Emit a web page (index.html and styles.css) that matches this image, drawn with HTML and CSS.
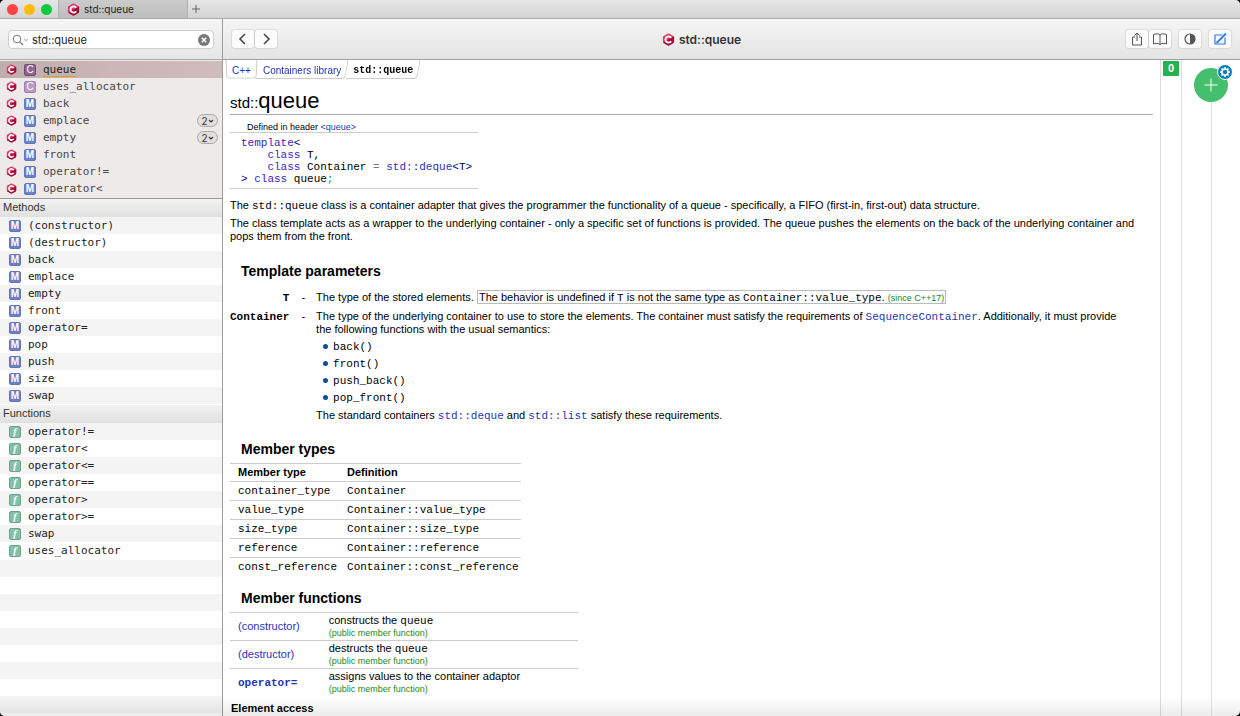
FILE: index.html
```html
<!DOCTYPE html>
<html lang="en">
<head>
    <meta charset="UTF-8">
    <meta name="viewport" content="width=device-width, initial-scale=1.0">
    <title>std::queue</title>
    <link rel="stylesheet" href="styles.css">
</head>
<body>
    <svg class="sprite" aria-hidden="true">
        <symbol id="logo" viewBox="0 0 14 14">
            <path d="M5.9 0.8 Q7 0.2 8.1 0.8 L12.2 3.2 Q13 3.7 13 4.7 V9.3 Q13 10.3 12.2 10.8 L8.1 13.2 Q7 13.8 5.9 13.2 L1.8 10.8 Q1 10.3 1 9.3 V4.7 Q1 3.7 1.8 3.2 Z" fill="#dc3a66"/>
            <path d="M12.8 3.8 Q13 4.2 13 4.7 V9.3 Q13 10.3 12.2 10.8 L8.1 13.2 Q7 13.8 5.9 13.2 L1.8 10.8 L1.2 10.2 L7 7 Z" fill="#a60b36"/>
            <path d="M9.8 5.2 A3.3 3.3 0 1 0 9.8 8.8" fill="none" stroke="#fff" stroke-width="2"/>
        </symbol>
        <symbol id="chevron" viewBox="0 0 6 6">
            <path d="M1 2 L3 4 L5 2" fill="none" stroke="currentColor" stroke-width="1.1"/>
        </symbol>
    </svg>

    <div class="window">
        <header class="titlebar">
            <span class="light red"></span>
            <span class="light yellow"></span>
            <span class="light green"></span>
            <div class="tab">
                <svg class="logo"><use href="#logo"/></svg>
                <span>std::queue</span>
            </div>
            <button class="new-tab" type="button" aria-label="New tab">
                <svg viewBox="0 0 10 10"><path d="M5 1 V9 M1 5 H9" stroke="#666" stroke-width="1" fill="none"/></svg>
            </button>
        </header>

        <div class="panes">
            <aside class="sidebar">
                <div class="search-bar">
                    <label class="search">
                        <svg class="search-icon" viewBox="0 0 18 12">
                            <circle cx="5" cy="5" r="3.8" fill="none" stroke="#777" stroke-width="1"/>
                            <path d="M7.8 7.8 L11 11" stroke="#777" stroke-width="1.2"/>
                            <path d="M12.3 5 L14 6.7 L15.7 5" fill="none" stroke="#888" stroke-width="1"/>
                        </svg>
                        <input type="text" value="std::queue" aria-label="Search">
                        <button class="clear" type="button" aria-label="Clear">
                            <svg viewBox="0 0 12 12"><circle cx="6" cy="6" r="6" fill="#777"/><path d="M3.8 3.8 L8.2 8.2 M8.2 3.8 L3.8 8.2" stroke="#fff" stroke-width="1.5"/></svg>
                        </button>
                    </label>
                </div>

                <ul class="results">
                    <li class="selected"><svg class="logo"><use href="#logo"/></svg><i class="kind class-dark">C</i><mark>queue</mark></li>
                    <li><svg class="logo"><use href="#logo"/></svg><i class="kind class">C</i>uses_allocator</li>
                    <li><svg class="logo"><use href="#logo"/></svg><i class="kind method">M</i>back</li>
                    <li><svg class="logo"><use href="#logo"/></svg><i class="kind method">M</i>emplace <button class="count" type="button">2<svg><use href="#chevron"/></svg></button></li>
                    <li><svg class="logo"><use href="#logo"/></svg><i class="kind method">M</i>empty <button class="count" type="button">2<svg><use href="#chevron"/></svg></button></li>
                    <li><svg class="logo"><use href="#logo"/></svg><i class="kind method">M</i>front</li>
                    <li><svg class="logo"><use href="#logo"/></svg><i class="kind method">M</i>operator!=</li>
                    <li><svg class="logo"><use href="#logo"/></svg><i class="kind method">M</i>operator&lt;</li>
                </ul>

                <h2>Methods</h2>
                <ul class="members">
                    <li><i class="kind method">M</i>(constructor)</li>
                    <li><i class="kind method">M</i>(destructor)</li>
                    <li><i class="kind method">M</i>back</li>
                    <li><i class="kind method">M</i>emplace</li>
                    <li><i class="kind method">M</i>empty</li>
                    <li><i class="kind method">M</i>front</li>
                    <li><i class="kind method">M</i>operator=</li>
                    <li><i class="kind method">M</i>pop</li>
                    <li><i class="kind method">M</i>push</li>
                    <li><i class="kind method">M</i>size</li>
                    <li><i class="kind method">M</i>swap</li>
                </ul>

                <h2>Functions</h2>
                <ul class="members">
                    <li><i class="kind func">f</i>operator!=</li>
                    <li><i class="kind func">f</i>operator&lt;</li>
                    <li><i class="kind func">f</i>operator&lt;=</li>
                    <li><i class="kind func">f</i>operator==</li>
                    <li><i class="kind func">f</i>operator&gt;</li>
                    <li><i class="kind func">f</i>operator&gt;=</li>
                    <li><i class="kind func">f</i>swap</li>
                    <li><i class="kind func">f</i>uses_allocator</li>
                </ul>
                <div class="empty-rows"></div>
            </aside>

            <main class="main">
                <div class="toolbar">
                    <div class="tools">
                        <button type="button" aria-label="Back"><svg viewBox="0 0 14 14"><path d="M9 2 L4 7 L9 12" fill="none" stroke="#444" stroke-width="1.5"/></svg></button>
                        <button type="button" aria-label="Forward"><svg viewBox="0 0 14 14"><path d="M5 2 L10 7 L5 12" fill="none" stroke="#444" stroke-width="1.5"/></svg></button>
                    </div>
                    <div class="title"><svg class="logo"><use href="#logo"/></svg>std::queue</div>
                    <div class="tools right">
                        <div class="segmented">
                            <button type="button" aria-label="Share"><svg viewBox="0 0 14 14"><path d="M5 5 H2.5 V13 H11.5 V5 H9 M7 9 V1 M4.5 3.5 L7 1 L9.5 3.5" fill="none" stroke="#555" stroke-width="1"/></svg></button>
                            <button type="button" aria-label="Bookmarks"><svg viewBox="0 0 14 14"><path d="M7 3 C5.5 1.5 2.5 1.5 0.5 2.5 V12 C2.5 11 5.5 11 7 12.5 C8.5 11 11.5 11 13.5 12 V2.5 C11.5 1.5 8.5 1.5 7 3 V12.5" fill="none" stroke="#555" stroke-width="1"/></svg></button>
                        </div>
                        <button type="button" aria-label="Contrast"><svg viewBox="0 0 14 14"><circle cx="7" cy="7" r="5" fill="none" stroke="#555" stroke-width="1.2"/><path d="M7 2 A5 5 0 0 1 7 12 Z" fill="#555"/></svg></button>
                        <button type="button" aria-label="Annotate"><svg viewBox="0 0 14 14"><path d="M9.5 3 H2 V12 H12 V5.5" fill="none" stroke="#2f7cf0" stroke-width="1.2"/><path d="M3.5 11 L13 1.5" stroke="#2f7cf0" stroke-width="1.8"/></svg></button>
                    </div>
                </div>

                <div class="viewer">
                    <article class="doc">
                        <nav class="crumbs">
                            <a href="#cpp">C++</a>
                            <a href="#containers">Containers library</a>
                            <b>std::queue</b>
                        </nav>

                        <h1><small>std::</small>queue</h1>

                        <table class="declaration">
                            <tr><td class="header">Defined in header <a href="#header">&lt;queue&gt;</a></td></tr>
                            <tr><td><pre><b>template</b><u>&lt;</u>
    <b>class</b> T,
    <b>class</b> Container <s>=</s> <a href="#deque">std::deque</a><u>&lt;</u>T<u>&gt;</u>
<u>&gt;</u> <b>class</b> queue<em>;</em></pre></td></tr>
                        </table>

                        <p>The <code>std::queue</code> class is a container adapter that gives the programmer the functionality of a queue - specifically, a FIFO (first-in, first-out) data structure.</p>
                        <p>The class template acts as a wrapper to the underlying container - only a specific set of functions is provided. The queue pushes the elements on the back of the underlying container and pops them from the front.</p>

                        <h3>Template parameters</h3>
                        <table class="params">
                            <tr>
                                <th><code>T</code></th>
                                <td>-</td>
                                <td>The type of the stored elements. <span class="since-box">The behavior is undefined if <code>T</code> is not the same type as <code>Container::value_type</code>. <span class="note">(since C++17)</span></span></td>
                            </tr>
                            <tr>
                                <th><code>Container</code></th>
                                <td>-</td>
                                <td>The type of the underlying container to use to store the elements. The container must satisfy the requirements of <a href="#sequence"><code>SequenceContainer</code></a>. Additionally, it must provide the following functions with the usual semantics:
                                    <ul>
                                        <li><code>back()</code></li>
                                        <li><code>front()</code></li>
                                        <li><code>push_back()</code></li>
                                        <li><code>pop_front()</code></li>
                                    </ul>
                                    The standard containers <a href="#deque"><code>std::deque</code></a> and <a href="#list"><code>std::list</code></a> satisfy these requirements.
                                </td>
                            </tr>
                        </table>

                        <h3>Member types</h3>
                        <table class="types">
                            <tr><th>Member type</th><th>Definition</th></tr>
                            <tr><td><code>container_type</code></td><td><code>Container</code></td></tr>
                            <tr><td><code>value_type</code></td><td><code>Container::value_type</code></td></tr>
                            <tr><td><code>size_type</code></td><td><code>Container::size_type</code></td></tr>
                            <tr><td><code>reference</code></td><td><code>Container::reference</code></td></tr>
                            <tr><td><code>const_reference</code></td><td><code>Container::const_reference</code></td></tr>
                        </table>

                        <h3>Member functions</h3>
                        <table class="functions">
                            <tr><td><a href="#ctor">(constructor)</a></td><td>constructs the <code>queue</code><div class="note">(public member function)</div></td></tr>
                            <tr><td><a href="#dtor">(destructor)</a></td><td>destructs the <code>queue</code><div class="note">(public member function)</div></td></tr>
                            <tr><td><a href="#assign"><code><b>operator=</b></code></a></td><td>assigns values to the container adaptor<div class="note">(public member function)</div></td></tr>
                        </table>
                        <h4>Element access</h4>
                    </article>

                    <div class="gutter"><span>0</span></div>
                    <div class="notes">
                        <div class="add-wrap">
                            <button class="add" type="button" aria-label="Add note"><svg viewBox="0 0 14 14"><path d="M7 0.5 V13.5 M0.5 7 H13.5" stroke="#fff" stroke-width="1"/></svg></button>
                            <button class="settings" type="button" aria-label="Settings"><svg viewBox="0 0 12 12"><circle cx="6" cy="6" r="3" fill="none" stroke="#fff" stroke-width="1.6"/><path d="M6 1 V3 M6 9 V11 M1 6 H3 M9 6 H11 M2.5 2.5 L3.9 3.9 M8.1 8.1 L9.5 9.5 M9.5 2.5 L8.1 3.9 M3.9 8.1 L2.5 9.5" stroke="#fff" stroke-width="1.5"/></svg></button>
                        </div>
                        <div class="timeline"></div>
                    </div>
                </div>
            </main>
        </div>
    </div>
</body>
</html>
```
FILE: styles.css
```css
* {
    box-sizing: border-box;
}
body {
    margin: 0;
    background: #111;
    font-family: "Liberation Sans", Arial, sans-serif;
    font-size: 11px;
    color: #000;
}
button {
    padding: 0;
    border: none;
    background: none;
    font: inherit;
    cursor: pointer;
}
a {
    color: #1f35b5;
    text-decoration: none;
}
ul {
    margin: 0;
    padding: 0;
    list-style: none;
}
.sprite {
    display: none;
}
.logo {
    width: 13px;
    height: 13px;
    flex: none;
}
.window {
    position: relative;
    height: 100vh;
    display: flex;
    flex-direction: column;
    overflow: hidden;
    border-radius: 5px;
    background: #fff;
}
/* soft shade along the bottom edge of the window */
.window::after {
    content: "";
    position: absolute;
    left: 0;
    right: 0;
    bottom: 0;
    height: 20px;
    background: linear-gradient(rgba(0, 0, 0, 0), rgba(0, 0, 0, 0.08));
    pointer-events: none;
}

/* title bar */
.titlebar {
    display: flex;
    align-items: center;
    height: 19px;
    flex: none;
    padding-left: 7px;
    background: linear-gradient(#e6e6e6, #d4d4d4);
    border-bottom: 1px solid #acacac;
}
.light {
    width: 11px;
    height: 11px;
    margin-right: 6px;
    border-radius: 50%;
}
.red { background: #fc4245; }
.yellow { background: #fdbc0d; }
.green { background: #0fca3d; }
.tab {
    display: flex;
    align-items: center;
    gap: 4px;
    width: 130px;
    height: 18px;
    padding-left: 8px;
    background: linear-gradient(#cbcbcb, #bdbdbd);
    border-left: 1px solid #b0b0b0;
    border-right: 1px solid #b0b0b0;
    font-family: Inter, sans-serif;
    font-size: 10px;
    color: #222;
}
.new-tab {
    margin-left: 3px;
    height: 10px;
}
.new-tab svg {
    display: block;
    width: 10px;
    height: 10px;
}

.panes {
    display: flex;
    flex: 1;
    min-height: 0;
}

/* sidebar */
.sidebar {
    display: flex;
    flex-direction: column;
    flex: none;
    width: 223px;
    overflow: hidden;
    border-right: 1px solid #9c9c9c;
    font-family: "DejaVu Sans Mono", monospace;
    color: #222;
}
.search-bar {
    height: 41px;
    flex: none;
    padding: 11px 8px;
    background: linear-gradient(#f5f5f5, #e6e6e6);
    border-bottom: 1px solid #a8a8a8;
}
.search {
    display: flex;
    align-items: center;
    height: 19px;
    padding: 0 3px;
    background: #fff;
    border: 1px solid #cfcfcf;
    border-radius: 4px;
}
.search-icon {
    width: 18px;
    height: 12px;
    flex: none;
}
.search input {
    flex: 1;
    min-width: 0;
    padding: 0 2px;
    border: none;
    outline: none;
    background: none;
    font-family: Inter, sans-serif;
    font-size: 11px;
    color: #222;
}
.clear, .clear svg {
    display: block;
    width: 12px;
    height: 12px;
}
.sidebar li {
    display: flex;
    align-items: center;
    height: 17px;
}
.results {
    flex: none;
    padding: 1px 0;
    background: #eeeaea;
    border-bottom: 1px solid #999;
    color: #4a4545;
}
.results li {
    padding: 0 4px 0 6px;
}
.results .logo {
    width: 11px;
    height: 11px;
    margin-right: 7px;
}
.results .selected {
    background: linear-gradient(90deg, #bfaeb0, #cbb5b6 50%, #cfbcbc);
}
.selected mark {
    background: none;
    color: #222;
    border-bottom: 1px solid #d9a520;
    line-height: 13px;
}
.kind {
    display: block;
    flex: none;
    width: 12px;
    height: 12px;
    margin-right: 7px;
    border: 1px solid;
    border-radius: 2px;
    font-family: "Liberation Sans", Arial, sans-serif;
    font-size: 10px;
    font-style: normal;
    line-height: 10px;
    text-align: center;
    color: #fff;
}
.method {
    background: #7080c6;
    border-color: #6474bd;
    font-weight: bold;
}
.class {
    background: #b79ac6;
    border-color: #9d80b0;
}
.class-dark {
    background: #8e6590;
    border-color: #70496f;
}
.func {
    background: #86bfa5;
    border-color: #66a68a;
    font-family: "Liberation Serif", serif;
    font-style: italic;
    font-weight: bold;
}
.count {
    display: flex;
    align-items: center;
    justify-content: center;
    width: 21px;
    height: 13px;
    margin-left: auto;
    background: #e3dfdf;
    border: 1px solid #aaa6a6;
    border-radius: 7px;
    font-family: Inter, sans-serif;
    font-size: 10px;
    color: #333;
}
.count svg {
    width: 6px;
    height: 6px;
}
.sidebar h2 {
    flex: none;
    height: 18px;
    margin: 0;
    padding-left: 3px;
    background: linear-gradient(#f2f2f2, #e0e0e0);
    font-family: "Liberation Sans", Arial, sans-serif;
    font-size: 11px;
    font-weight: normal;
    line-height: 17px;
    color: #333;
}
.members {
    flex: none;
    padding-bottom: 1px;
}
.members li {
    padding-left: 9px;
}
.members li:nth-child(odd) {
    background: #f4f4f4;
}
.empty-rows {
    flex: 1;
    background: repeating-linear-gradient(#f4f4f4 0 17px, #fff 17px 34px);
}

/* toolbar */
.main {
    display: flex;
    flex-direction: column;
    flex: 1;
    min-width: 0;
}
.toolbar {
    display: flex;
    align-items: center;
    justify-content: space-between;
    height: 41px;
    flex: none;
    padding: 0 9px;
    background: linear-gradient(#f5f5f5, #e4e4e4);
    border-bottom: 1px solid #a0a0a0;
}
.tools {
    display: flex;
    gap: 1px;
}
.tools.right {
    gap: 8px;
}
.tools button {
    display: flex;
    align-items: center;
    justify-content: center;
    width: 22px;
    height: 18px;
    background: #fbfbfb;
    border-radius: 3px;
    box-shadow: 0 0 1px 1px rgba(0, 0, 0, 0.08);
}
.tools svg {
    width: 14px;
    height: 14px;
}
.segmented {
    display: flex;
    gap: 1px;
}
.title {
    display: flex;
    align-items: center;
    gap: 4px;
    font-family: Inter, sans-serif;
    font-size: 12px;
    font-weight: 600;
    color: #333;
}

/* documentation page */
.viewer {
    display: flex;
    flex: 1;
    min-height: 0;
    overflow: hidden;
}
.doc {
    flex: 1;
    min-width: 0;
    padding: 0 7px;
    overflow: hidden;
    line-height: 13px;
}
code, pre {
    font-family: "Liberation Mono", "Courier New", monospace;
    font-size: 11px;
    line-height: 12px;
}
.crumbs {
    display: flex;
    margin-left: -4px;
    font-size: 10px;
}
.crumbs > * {
    position: relative;
    height: 19px;
    padding: 0 6px;
    line-height: 21px;
}
/* slanted tab outline behind each crumb */
.crumbs > *::before {
    content: "";
    position: absolute;
    inset: 0;
    border: 1px solid #ccc;
    border-top: none;
    border-left: none;
    border-radius: 0 0 4px 0;
    transform: skewX(-10deg);
}
.crumbs > :first-child::before {
    border-left: 1px solid #ccc;
    border-bottom-left-radius: 4px;
    transform: perspective(40px) rotateX(-8deg);
}
.crumbs b {
    font-family: "Liberation Mono", "Courier New", monospace;
}
h1 {
    margin: 11px 0 8px;
    border-bottom: 1px solid #aaa;
    font-size: 22px;
    font-weight: normal;
    line-height: 22px;
}
h1 small {
    font-size: 15px;
}
table {
    border-collapse: collapse;
}
td, th {
    padding: 0;
    text-align: left;
    vertical-align: top;
}
.declaration {
    min-width: 248px;
}
.declaration td {
    padding: 4px 2px 3px 11px;
    border-bottom: 1px solid #ccc;
}
.declaration .header {
    padding: 0 17px;
    font-size: 9px;
    line-height: 9px;
}
pre {
    margin: 0;
}
pre b {
    font-weight: normal;
    color: #3d1fc0;
}
pre u {
    text-decoration: none;
    color: #000080;
}
pre s {
    text-decoration: none;
    color: #777;
}
pre em {
    font-style: normal;
    color: #0b8a4a;
}
.doc p {
    margin: 0 0 5px;
}
.declaration + p {
    margin-top: 10px;
}
h3 {
    margin: 12px 0 5px 11px;
    font-size: 14px;
    line-height: 18px;
}
p + h3 {
    margin-top: 19px;
}
.params {
    margin-top: 11px;
}
.params th {
    padding-right: 12px;
    text-align: right;
}
.params td {
    padding: 0 11px 6px 0;
}
.params td:last-child {
    padding-right: 20px;
}
.since-box {
    padding: 0 1px;
    border: 1px solid #bbb;
}
.note {
    font-size: 9px;
    line-height: 12px;
    color: #188a18;
}
.params ul {
    padding: 2px 0 3px 7px;
}
.params li {
    display: flex;
    align-items: center;
    gap: 5px;
    height: 17px;
}
.params li::before {
    content: "";
    width: 5px;
    height: 5px;
    border-radius: 50%;
    background: #0a4f94;
}
.types th, .types td {
    height: 19px;
    padding: 1px 2px 3px 8px;
    vertical-align: middle;
}
.types th {
    height: 18px;
    padding: 2px 2px 2px 8px;
}
.types tr {
    border-top: 1px solid #ccc;
}
.functions tr {
    border-top: 1px solid #ccc;
}
.functions td {
    padding: 1px 0 1px 8px;
    vertical-align: middle;
}
.functions td + td {
    padding: 1px 58px 1px 29px;
}
h4 {
    margin: 6px 1px;
    font-size: 11px;
}

/* right column */
.gutter {
    flex: none;
    width: 22px;
    padding: 1px 2px;
    border-left: 1px solid #ddd;
    border-right: 1px solid #ddd;
}
.gutter span {
    display: block;
    height: 15px;
    background: #25b052;
    border-radius: 1px;
    font-weight: bold;
    line-height: 15px;
    text-align: center;
    color: #fff;
}
.notes {
    display: flex;
    flex-direction: column;
    align-items: center;
    flex: none;
    width: 58px;
    padding-top: 8px;
}
.add-wrap {
    position: relative;
}
.add {
    display: flex;
    align-items: center;
    justify-content: center;
    width: 34px;
    height: 34px;
    border-radius: 50%;
    background: #43bf6d;
}
.add svg {
    width: 14px;
    height: 14px;
}
.settings {
    position: absolute;
    top: -4px;
    right: -5px;
    display: flex;
    align-items: center;
    justify-content: center;
    width: 16px;
    height: 16px;
    border: 1px solid #fff;
    border-radius: 50%;
    background: #0b82b5;
}
.settings svg {
    width: 12px;
    height: 12px;
}
.timeline {
    flex: 1;
    width: 1px;
    background: #e4e4e4;
}
```
